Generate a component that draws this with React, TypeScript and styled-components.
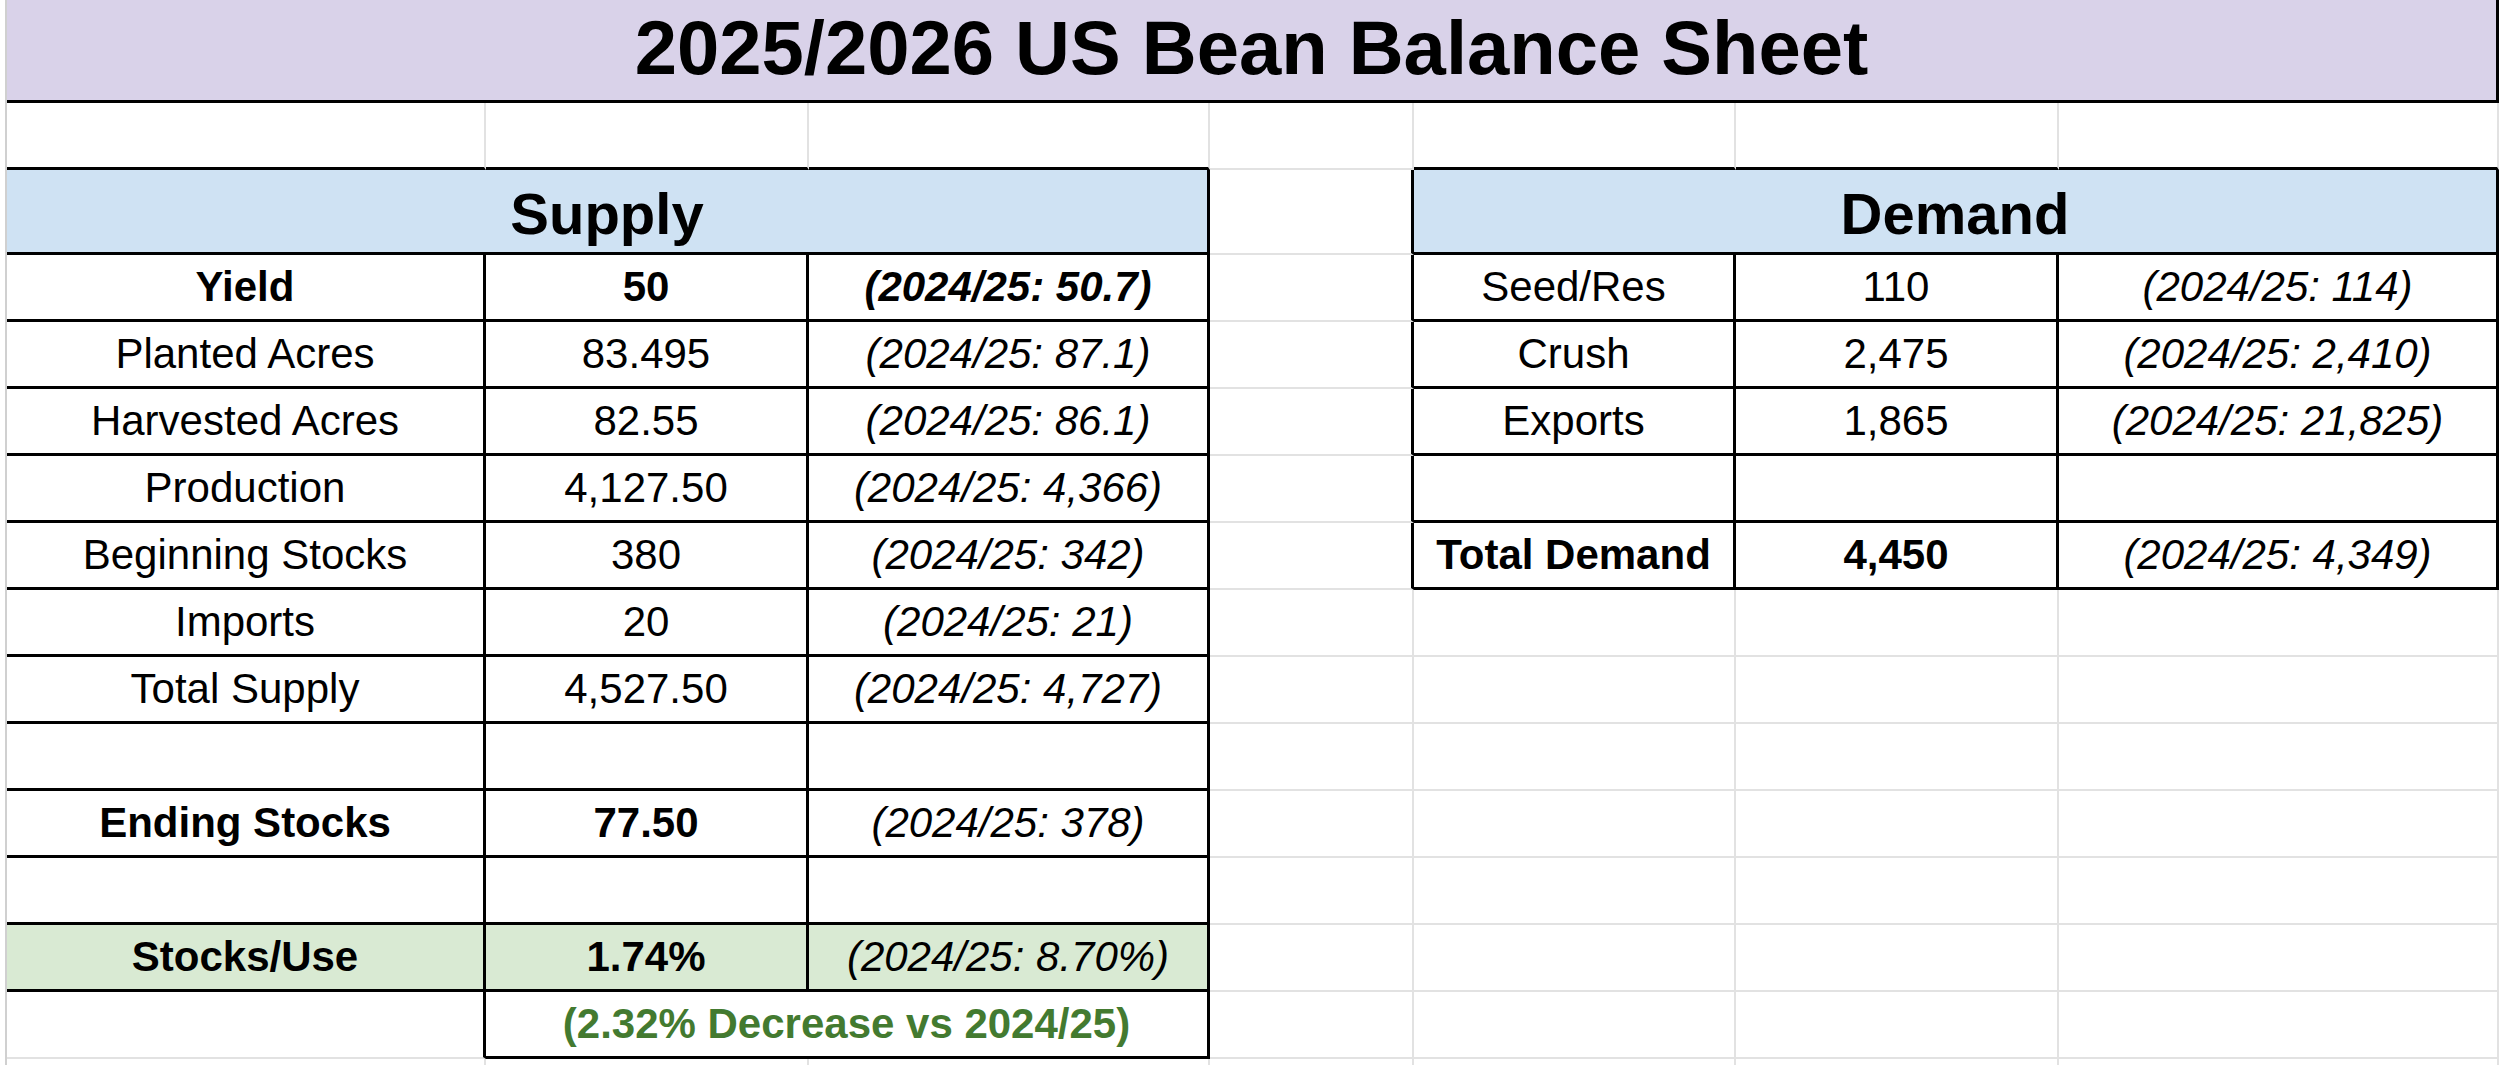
import React from "react";
import styled, { createGlobalStyle } from "styled-components";

type Line = "black" | "grid" | "none";

interface CellSpec {
  text?: string;
  span?: number;
  bold?: boolean;
  italic?: boolean;
  bg?: string;
  color?: string;
  size?: number;
  shift?: number;
  bottom: Line;
  right: Line;
}

interface TableRow {
  cells: [string, string, string];
  emphasis?: "all" | "lead";
  bg?: string;
}

const FONT = `"Liberation Sans", Arial, Helvetica, sans-serif`;
const GRID_COLOR = "#e2e2e2";
const TITLE_BG = "#d9d2e9";
const HEADER_BG = "#cfe2f3";
const STOCKS_BG = "#d9ead3";
const GREEN_TEXT = "#437a30";

const COLUMNS = [479, 323, 401, 204, 322, 323, 440];
const ROWS = [103, 67, 85, ...Array(12).fill(67), 6];

const supplyRows: TableRow[] = [
  { cells: ["Yield", "50", "(2024/25: 50.7)"], emphasis: "all" },
  { cells: ["Planted Acres", "83.495", "(2024/25: 87.1)"] },
  { cells: ["Harvested Acres", "82.55", "(2024/25: 86.1)"] },
  { cells: ["Production", "4,127.50", "(2024/25: 4,366)"] },
  { cells: ["Beginning Stocks", "380", "(2024/25: 342)"] },
  { cells: ["Imports", "20", "(2024/25: 21)"] },
  { cells: ["Total Supply", "4,527.50", "(2024/25: 4,727)"] },
  { cells: ["", "", ""] },
  { cells: ["Ending Stocks", "77.50", "(2024/25: 378)"], emphasis: "lead" },
  { cells: ["", "", ""] },
  {
    cells: ["Stocks/Use", "1.74%", "(2024/25: 8.70%)"],
    emphasis: "lead",
    bg: STOCKS_BG,
  },
];

const demandRows: TableRow[] = [
  { cells: ["Seed/Res", "110", "(2024/25: 114)"] },
  { cells: ["Crush", "2,475", "(2024/25: 2,410)"] },
  { cells: ["Exports", "1,865", "(2024/25: 21,825)"] },
  { cells: ["", "", ""] },
  { cells: ["Total Demand", "4,450", "(2024/25: 4,349)"], emphasis: "lead" },
];

const GlobalStyle = createGlobalStyle`
  html, body {
    margin: 0;
    padding: 0;
    background: #ffffff;
    overflow: hidden;
  }
  body {
    font-family: ${FONT};
    color: #000000;
  }
`;

const Page = styled.div`
  width: 2500px;
  height: 1065px;
  padding-left: 5px;
  box-sizing: border-box;
  background: #ffffff;
  overflow: hidden;
`;

const Sheet = styled.div`
  display: grid;
  grid-template-columns: ${COLUMNS.map((w) => `${w}px`).join(" ")};
  grid-template-rows: ${ROWS.map((h) => `${h}px`).join(" ")};
  border-left: 2px solid #d0d0d0;
  width: max-content;
`;

const lineStyle = (line: Line) => {
  if (line === "black") return "3px solid #000000";
  if (line === "grid") return `2px solid ${GRID_COLOR}`;
  return "none";
};

// shift > 0 nudges the text down, < 0 nudges it up
const Cell = styled.div<{
  $span: number;
  $bold: boolean;
  $italic: boolean;
  $bg: string;
  $color: string;
  $size: number;
  $shift: number;
  $bottom: Line;
  $right: Line;
}>`
  grid-column: span ${({ $span }) => $span};
  box-sizing: border-box;
  display: flex;
  align-items: center;
  justify-content: center;
  overflow: hidden;
  white-space: nowrap;
  padding-top: ${({ $shift }) => Math.max($shift, 0)}px;
  padding-bottom: ${({ $shift }) => Math.max(-$shift, 0)}px;
  background: ${({ $bg }) => $bg};
  color: ${({ $color }) => $color};
  font-family: ${FONT};
  font-size: ${({ $size }) => $size}px;
  font-weight: ${({ $bold }) => ($bold ? 700 : 400)};
  font-style: ${({ $italic }) => ($italic ? "italic" : "normal")};
  border-bottom: ${({ $bottom }) => lineStyle($bottom)};
  border-right: ${({ $right }) => lineStyle($right)};
`;

function tableCells(row: TableRow): CellSpec[] {
  const [label, value, note] = row.cells;
  const strong = row.emphasis === "all" || row.emphasis === "lead";
  return [
    { text: label, bold: strong, bg: row.bg, bottom: "black", right: "black" },
    { text: value, bold: strong, bg: row.bg, bottom: "black", right: "black" },
    {
      text: note,
      italic: true,
      bold: row.emphasis === "all",
      bg: row.bg,
      bottom: "black",
      right: "black",
    },
  ];
}

function blank(bottom: Line, right: Line): CellSpec {
  return { bottom, right };
}

function buildCells(): CellSpec[] {
  const cells: CellSpec[] = [];

  // title bar, merged across the sheet
  cells.push({
    text: "2025/2026 US Bean Balance Sheet",
    span: 7,
    bold: true,
    size: 76,
    shift: -6,
    bg: TITLE_BG,
    bottom: "black",
    right: "black",
  });

  // spacer row above both tables
  COLUMNS.forEach((_, i) => {
    cells.push(blank(i === 3 ? "grid" : "black", "grid"));
  });

  // section headers
  cells.push({
    text: "Supply",
    span: 3,
    bold: true,
    size: 58,
    shift: 4,
    bg: HEADER_BG,
    bottom: "black",
    right: "black",
  });
  cells.push(blank("grid", "black"));
  cells.push({
    text: "Demand",
    span: 3,
    bold: true,
    size: 58,
    shift: 4,
    bg: HEADER_BG,
    bottom: "black",
    right: "black",
  });

  supplyRows.forEach((row, i) => {
    cells.push(...tableCells(row));
    const demand = demandRows[i];
    cells.push(blank("grid", demand ? "black" : "grid"));
    if (demand) {
      cells.push(...tableCells(demand));
    } else {
      cells.push(blank("grid", "grid"), blank("grid", "grid"), blank("grid", "grid"));
    }
  });

  // change note under stocks/use
  cells.push(blank("grid", "black"));
  cells.push({
    text: "(2.32% Decrease vs 2024/25)",
    span: 2,
    bold: true,
    color: GREEN_TEXT,
    bottom: "black",
    right: "black",
  });
  cells.push(blank("grid", "grid"), blank("grid", "grid"), blank("grid", "grid"), blank("grid", "grid"));

  // sliver of the next row at the bottom edge
  COLUMNS.forEach(() => cells.push(blank("none", "grid")));

  return cells;
}

export default function App() {
  const cells = buildCells();

  return (
    <>
      <GlobalStyle />
      <Page>
        <Sheet>
          {cells.map((c, index) => (
            <Cell
              key={index}
              $span={c.span ?? 1}
              $bold={!!c.bold}
              $italic={!!c.italic}
              $bg={c.bg ?? "#ffffff"}
              $color={c.color ?? "#000000"}
              $size={c.size ?? 42}
              $shift={c.shift ?? 0}
              $bottom={c.bottom}
              $right={c.right}
            >
              {c.text}
            </Cell>
          ))}
        </Sheet>
      </Page>
    </>
  );
}
